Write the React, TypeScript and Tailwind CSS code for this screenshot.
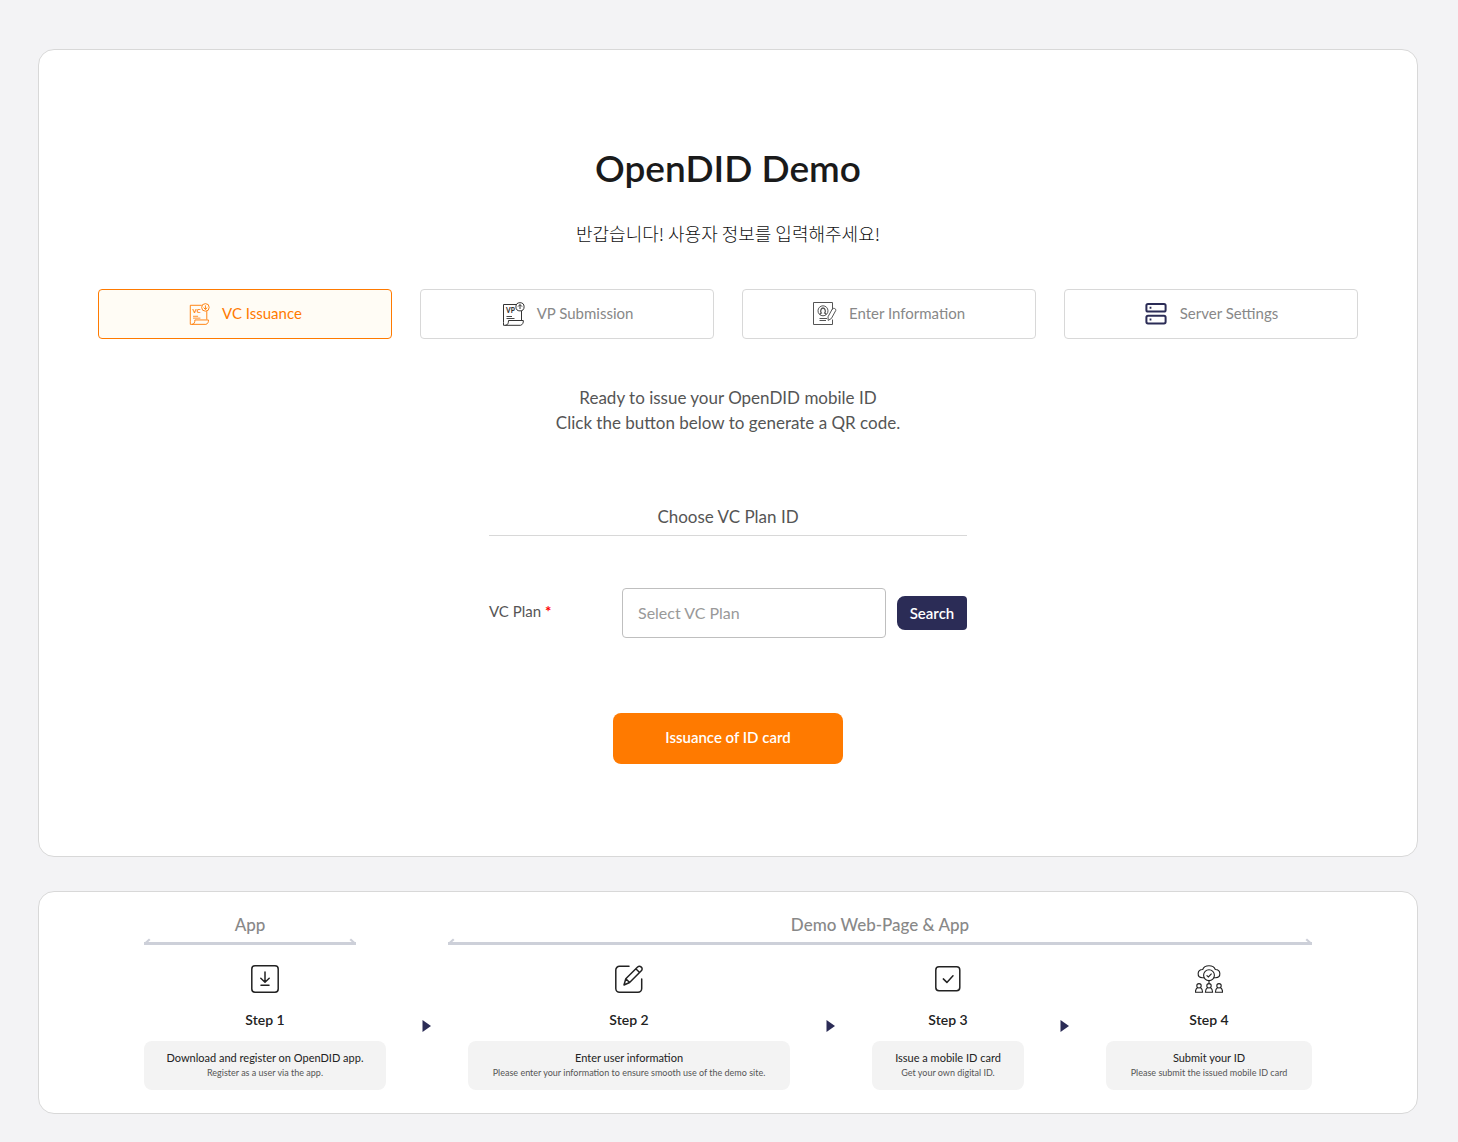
import type { ReactNode } from "react";

function ScrollIcon({ label, arrow, className }: { label: string; arrow: "down" | "up"; className: string }) {
  return (
    <svg viewBox="0 0 24 24" className={className} fill="none" stroke="currentColor" strokeWidth="1" aria-hidden="true">
      <path d="M15 2.5H2.5V20.5M20.5 8.8V18" />
      <circle cx="19" cy="4.8" r="4.1" />
      <path d={arrow === "down" ? "M19 2.6V7M17 5L19 7L21 5" : "M19 7V2.6M17 4.6L19 2.6L21 4.6"} />
      <path d="M5.5 14.5H11M5.5 16.5H13.5" strokeWidth="0.9" />
      <path d="M7.5 18.5H22.3C22.6 20.5 21.5 23 19.5 23.3H2.5V20.5M7.5 18.5C7.6 21 6.6 23.3 4.4 23.3" />
      <text x="5" y="11.4" fontSize="6.6" fontWeight="900" fill="currentColor" stroke="none" fontFamily="Lato">
        {label}
      </text>
    </svg>
  );
}

function ProfileIcon() {
  return (
    <svg viewBox="0 0 24 24" className="size-6 text-[#555]" fill="none" stroke="currentColor" strokeWidth="1" aria-hidden="true">
      <path d="M19.5 7.5V0.5H0.5V22.5H19.5V17.5" />
      <circle cx="10" cy="8.8" r="5" />
      <path d="M7 12.8C7 11.5 7.8 11.3 8.3 11C7.2 9.9 7.5 6 10 6S12.8 9.9 11.7 11C12.2 11.3 13 11.5 13 12.8" strokeWidth="1.3" />
      <path d="M6.5 16.5H14M6.5 18.5H13" />
      <path d="M19.3 7C20.3 5.6 23.4 6.6 22.8 8.4L18.4 16.5L15.2 18.4L15 14.8L19.3 7Z" />
    </svg>
  );
}

function ServerIcon() {
  return (
    <svg viewBox="0 0 24 24" className="size-6 text-[#2b2c56]" fill="none" stroke="currentColor" strokeWidth="2" aria-hidden="true">
      <rect x="2.4" y="2" width="19.2" height="7.6" rx="1.6" />
      <rect x="2.4" y="13.8" width="19.2" height="7.6" rx="1.6" />
      <path d="M5.6 5.8H7.4M5.6 17.6H7.4" />
    </svg>
  );
}

function DownloadIcon() {
  return (
    <svg viewBox="0 0 28 28" className="size-7" fill="none" stroke="currentColor" strokeWidth="1.5" strokeLinecap="round" strokeLinejoin="round" aria-hidden="true">
      <rect x="0.8" y="0.8" width="26.4" height="26.4" rx="3.2" />
      <path d="M14 7V17M9.8 13.3L14 17.2L18.2 13.3M10 20.3H18" />
    </svg>
  );
}

function EditIcon() {
  return (
    <svg viewBox="0 0 28 28" className="size-7" fill="none" stroke="currentColor" strokeWidth="1.5" strokeLinecap="round" strokeLinejoin="round" aria-hidden="true">
      <path d="M14 1.3H4.5A3.7 3.7 0 0 0 0.8 5V23.5A3.7 3.7 0 0 0 4.5 27.2H23A3.7 3.7 0 0 0 26.7 23.5V14" />
      <path d="M10.8 13.8L22.6 2C25 -0.2 28.8 3.2 26.3 5.8L14.6 17.5L9 20L10.8 13.8ZM10.8 13.8L14.6 17.5M20.8 3.8L24.6 7.5" />
    </svg>
  );
}

function CheckIcon() {
  return (
    <svg viewBox="0 0 28 28" className="size-7" fill="none" stroke="currentColor" strokeWidth="1.5" strokeLinecap="round" strokeLinejoin="round" aria-hidden="true">
      <rect x="1.8" y="1.8" width="24" height="24" rx="3.2" />
      <path d="M9.3 13.9L12.9 17.4L19 10.8" />
    </svg>
  );
}

function Person({ x }: { x: number }) {
  return (
    <g transform={`translate(${x} 0)`}>
      <circle cx="0" cy="20.8" r="2.2" />
      <path d="M-1.4 22.5C-3 23.5 -3.6 24.6 -3.6 27.3H3.6C3.6 24.6 3 23.5 1.4 22.5" />
    </g>
  );
}

function CloudPeopleIcon() {
  return (
    <svg viewBox="0 0 28 28" className="size-7" fill="none" stroke="currentColor" strokeWidth="1.1" aria-hidden="true">
      <path d="M9 12.8H7.3C1.5 12.5 1.9 4.6 7.7 4.5C9.5 -0.6 18.5 -0.6 20.3 4.5C26.1 4.6 26.5 12.5 20.7 12.8H19" />
      <circle cx="14" cy="10.2" r="5.4" />
      <path d="M11.6 10.3L13.4 12L16.6 8.6M14 15.6V18.6" />
      <Person x={4} />
      <Person x={14} />
      <Person x={24} />
    </svg>
  );
}

function Tab({ icon, active, children }: { icon: ReactNode; active?: boolean; children: ReactNode }) {
  return (
    <button
      type="button"
      className={
        "flex h-[50px] items-center justify-center gap-3 rounded border pb-px text-[15px] font-normal " +
        (active ? "border-[#ff7a00] bg-[#fffcf5] text-[#ff7a00]" : "border-[#d8d8d8] bg-white text-[#888]")
      }
    >
      {icon}
      {children}
    </button>
  );
}

function Span({ children }: { children: ReactNode }) {
  return (
    <div className="text-center text-[17px] font-medium leading-6 text-[#888]">
      {children}
      <div className="relative mt-[5px] h-[3px] bg-[#cdd0d9]">
        <svg viewBox="0 0 7 7" className="absolute bottom-0 left-0 size-[7px]" aria-hidden="true">
          <path d="M0 7V5L5 0.5L6.5 2L3 5V7Z" fill="#cdd0d9" />
        </svg>
        <svg viewBox="0 0 7 7" className="absolute right-0 bottom-0 size-[7px]" aria-hidden="true">
          <path d="M7 7V5L2 0.5L0.5 2L4 5V7Z" fill="#cdd0d9" />
        </svg>
      </div>
    </div>
  );
}

function Step({ icon, name, title, note }: { icon: ReactNode; name: string; title: string; note: string }) {
  return (
    <li className="flex flex-col items-center text-[#222]">
      {icon}
      <h3 className="mt-[17px] text-sm font-semibold leading-5">{name}</h3>
      <div className="mt-[11px] w-full rounded-lg bg-[#f3f3f3] pt-[9px] pb-[10px] text-center whitespace-nowrap">
        <p className="text-[11px] leading-[15px]">{title}</p>
        <p className="text-[9px] leading-[15px] text-[#555]">{note}</p>
      </div>
    </li>
  );
}

function NextArrow() {
  return (
    <li aria-hidden="true" className="flex items-center justify-center pr-0.5 pb-1">
      <svg viewBox="0 0 9 12" className="h-3 w-[9px]" fill="#2b2c56">
        <path d="M0.5 0L9 6L0.5 12Z" />
      </svg>
    </li>
  );
}

export default function App() {
  return (
    <div className="min-h-screen bg-[#f3f3f5] pt-[49px] pr-10 pb-7 pl-[38px] font-['Lato','Noto_Sans_CJK_KR',sans-serif]">
      <main className="rounded-2xl border border-[#d8d8d8] bg-white px-[59px] pt-[94px] pb-[92px]">
        <h1 className="text-center text-[37px] leading-[48px] font-semibold text-[#1a1a1a]">OpenDID Demo</h1>
        <p className="mt-[29px] text-center font-['Noto_Sans_CJK_KR',sans-serif] text-lg leading-6 font-light text-[#111]">
          반갑습니다! 사용자 정보를 입력해주세요!
        </p>

        <nav className="mt-11 grid grid-cols-4 gap-7">
          <Tab active icon={<ScrollIcon label="VC" arrow="down" className="size-[22px]" />}>VC Issuance</Tab>
          <Tab icon={<ScrollIcon label="VP" arrow="up" className="size-6 text-[#333]" />}>VP Submission</Tab>
          <Tab icon={<ProfileIcon />}>Enter Information</Tab>
          <Tab icon={<ServerIcon />}>Server Settings</Tab>
        </nav>

        <p className="mt-[46px] text-center text-[17px] leading-[25px] text-[#555]">
          Ready to issue your OpenDID mobile ID
          <br />
          Click the button below to generate a QR code.
        </p>

        <form className="mx-auto mt-[70px] flex max-w-[478px] flex-col" onSubmit={(e) => e.preventDefault()}>
          <h2 className="border-b border-[#d8d8d8] pb-1.5 text-center text-[17px] leading-6 text-[#555]">
            Choose VC Plan ID
          </h2>
          <div className="mt-[52px] flex items-center">
            <label htmlFor="vc-plan" className="w-[133px] pb-1 text-[15px] text-[#555]">
              VC Plan <span className="font-bold text-[#f00]">*</span>
            </label>
            <input
              id="vc-plan"
              type="text"
              placeholder="Select VC Plan"
              className="h-[50px] min-w-0 flex-1 rounded border border-[#bfbfbf] px-[15px] pb-0.5 text-base text-[#555] placeholder:text-[#999]"
            />
            <button type="button" className="ml-[11px] h-[34px] w-[70px] rounded-l-lg rounded-r bg-[#2b2c56] text-[15px] font-semibold text-white">
              Search
            </button>
          </div>
          <button type="submit" className="mx-auto mt-[75px] h-[51px] w-[230px] rounded-lg bg-[#ff7a00] pb-0.5 text-[15px] font-semibold text-white">
            Issuance of ID card
          </button>
        </form>
      </main>

      <section className="mt-[34px] rounded-2xl border border-[#d8d8d8] bg-white px-[105px] pt-[21px] pb-[23px]">
        <div className="grid grid-cols-[212fr_864fr] gap-[92px]">
          <Span>App</Span>
          <Span>Demo Web-Page &amp; App</Span>
        </div>
        <ol className="mt-5 grid grid-cols-[242fr_82fr_322fr_82fr_152fr_82fr_206fr]">
          <Step icon={<DownloadIcon />} name="Step 1" title="Download and register on OpenDID app." note="Register as a user via the app." />
          <NextArrow />
          <Step icon={<EditIcon />} name="Step 2" title="Enter user information" note="Please enter your information to ensure smooth use of the demo site." />
          <NextArrow />
          <Step icon={<CheckIcon />} name="Step 3" title="Issue a mobile ID card" note="Get your own digital ID." />
          <NextArrow />
          <Step icon={<CloudPeopleIcon />} name="Step 4" title="Submit your ID" note="Please submit the issued mobile ID card" />
        </ol>
      </section>
    </div>
  );
}
